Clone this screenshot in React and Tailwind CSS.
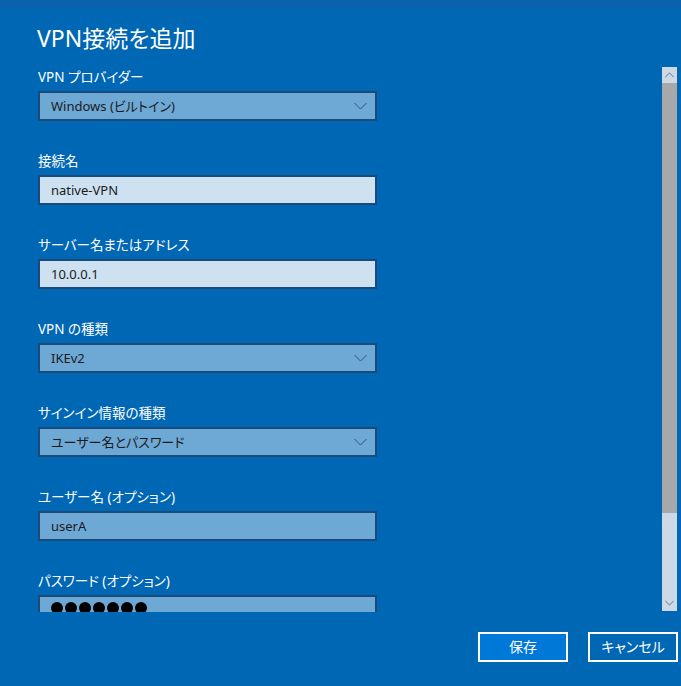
import React from "react";

const fields = [
  { label: "VPN プロバイダー", value: "Windows (ビルトイン)", kind: "select" },
  { label: "接続名", value: "native-VPN", kind: "light" },
  { label: "サーバー名またはアドレス", value: "10.0.0.1", kind: "light" },
  { label: "VPN の種類", value: "IKEv2", kind: "select" },
  { label: "サインイン情報の種類", value: "ユーザー名とパスワード", kind: "select" },
  { label: "ユーザー名 (オプション)", value: "userA", kind: "input" },
  { label: "パスワード (オプション)", value: "", kind: "password" },
];

const Chevron = ({ up = false, className = "" }) => (
  <svg
    width="13"
    height="8"
    viewBox="0 0 13 8"
    className={className}
    fill="none"
    stroke="currentColor"
    strokeWidth="1"
  >
    {up ? <path d="M0.5 7 L6.5 1 L12.5 7" /> : <path d="M0.5 1 L6.5 7 L12.5 1" />}
  </svg>
);

const Field = ({ field }) => {
  const boxBg = field.kind === "light" ? "bg-[#cde1f1]" : "bg-[#6ea8d5]";
  return (
    <div className="flex flex-col">
      <div className="h-[20px] text-[13.5px] leading-[20px] text-white">{field.label}</div>
      <div
        className={`mt-[4px] h-[30px] w-[339px] border-2 border-[#1a4a7a] ${boxBg} flex items-center pl-[11px] pr-[8px] text-[13px] text-[#1b1b1b]`}
      >
        {field.kind === "password" ? (
          <div className="flex gap-[2px] self-start mt-[5px]">
            {Array.from({ length: 7 }).map((_, i) => (
              <div key={i} className="w-[12px] h-[12px] rounded-full bg-black" />
            ))}
          </div>
        ) : (
          <span className="flex-1 leading-[20px]">{field.value}</span>
        )}
        {field.kind === "select" && <Chevron className="text-[#2d557e]" />}
      </div>
    </div>
  );
};

export default function App() {
  return (
    <div
      className="w-[681px] h-[686px] bg-[#0067b4] flex flex-col overflow-hidden [font-feature-settings:'palt']"
      style={{ fontFamily: '"Noto Sans", "Noto Sans CJK JP", sans-serif' }}
    >
      <div className="h-[8px] bg-[#0a62ac]" />
      <div className="h-[58px] px-[37px] pt-[14px] text-[23px] leading-[32px] text-white">
        VPN接続を追加
      </div>
      <div className="flex h-[546px]">
        <div className="flex-1 overflow-hidden pl-[38px] pt-[1px] flex flex-col gap-[30px]">
          {fields.map((f) => (
            <Field key={f.label} field={f} />
          ))}
        </div>
        <div className="w-[15px] mr-[4px] mt-[1px] h-[544px] flex flex-col bg-[#cdd9e5]">
          <div className="h-[16px] flex items-center justify-center text-[#3a4a5a]">
            <Chevron up className="w-[9px] h-[6px]" />
          </div>
          <div className="h-[430px] bg-[#a6a8aa]" />
          <div className="flex-1" />
          <div className="h-[16px] flex items-center justify-center text-[#3a4a5a]">
            <Chevron className="w-[9px] h-[6px]" />
          </div>
        </div>
      </div>
      <div className="flex justify-end gap-[20px] pr-[3px] pt-[20px]">
        <button className="w-[90px] h-[30px] border-2 border-white bg-[#0078d7] text-white text-[14px] leading-[20px]">
          保存
        </button>
        <button className="w-[90px] h-[30px] border-2 border-white bg-[#0067b4] text-white text-[14px] leading-[20px]">
          キャンセル
        </button>
      </div>
    </div>
  );
}
